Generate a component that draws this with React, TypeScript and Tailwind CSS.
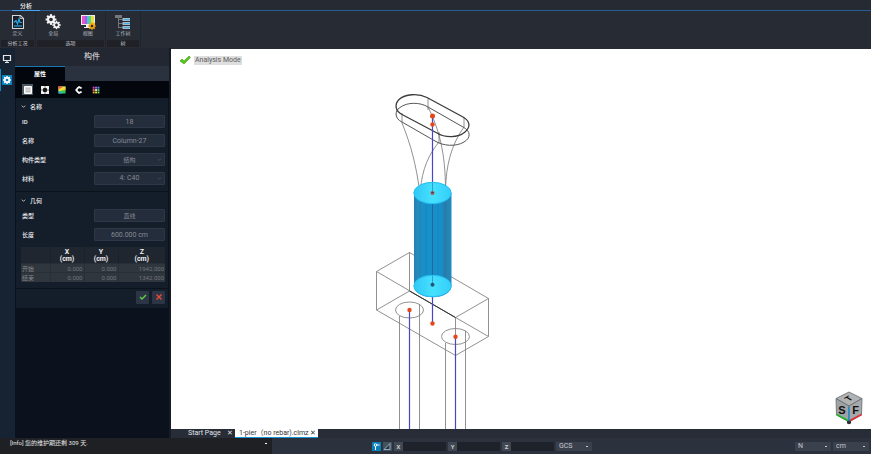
import React from "react";

const font = "font-['Roboto','Noto_Sans_CJK_SC',sans-serif]";

function RibbonGroup({ title, width, children }: { title: string; width: string; children: React.ReactNode }) {
  return (
    <section className={`flex shrink-0 flex-col border-r border-[#20242c] ${width}`}>
      <div className="flex flex-1 justify-around">{children}</div>
      <h2 className="mx-px mb-px h-[7px] bg-[#1f2127] text-center text-[5px] leading-[7px] text-[#c5c8cf]">{title}</h2>
    </section>
  );
}

function RibbonButton({ label, children }: { label: string; children: React.ReactNode }) {
  return (
    <button type="button" className="flex w-7 flex-col items-center pt-[3px] text-[5px] leading-[6px] text-[#b5b9c1]">
      <svg viewBox="0 0 16 16" className="h-4 w-4" aria-hidden="true">
        {children}
      </svg>
      {label}
    </button>
  );
}

function Gear({ cx, cy, r, color, hole }: { cx: number; cy: number; r: number; color: string; hole: string }) {
  return (
    <g>
      <circle cx={cx} cy={cy} r={r} fill={color} />
      {[0, 45, 90, 135].map((a) => (
        <rect key={a} x={cx - r * 0.25} y={cy - r * 1.35} width={r * 0.5} height={r * 2.7} fill={color} transform={`rotate(${a} ${cx} ${cy})`} />
      ))}
      <circle cx={cx} cy={cy} r={r * 0.45} fill={hole} />
    </g>
  );
}

function Ribbon() {
  return (
    <div className="flex h-[37px] shrink-0 bg-[#272b34]">
      <RibbonGroup title="分析工况" width="w-9">
        <RibbonButton label="定义">
          <path d="M2.500 1.500h8l3 3v10h-11z" fill="#17202a" stroke="#d4d6da" strokeWidth="1.100" />
          <path d="M10 1.500v3h3.500" fill="none" stroke="#d4d6da" strokeWidth=".8" />
          <path d="M4 8.500l2-2 1.500 3.500 1.500-5 1 3.500h2" fill="none" stroke="#29a5df" strokeWidth="1.200" />
          <path d="M4 12h8" stroke="#29a5df" strokeWidth="1.200" />
        </RibbonButton>
      </RibbonGroup>
      <RibbonGroup title="选项" width="w-[70px]">
        <RibbonButton label="全局">
          <Gear cx={6} cy={5.5} r={4} color="#f2f2f2" hole="#272b34" />
          <Gear cx={11.5} cy={11} r={3.1} color="#f2f2f2" hole="#272b34" />
        </RibbonButton>
        <RibbonButton label="视图">
          <path d="M1 1h14v10H1z" fill="#eee" />
          <path d="M2 2h3v8H2z" fill="#ef55c6" />
          <path d="M5 2h2v8H5z" fill="#9b60ee" />
          <path d="M7 2h2v8H7z" fill="#3fc9e6" />
          <path d="M9 2h2v8H9z" fill="#55dc6a" />
          <path d="M11 2h3v8h-3z" fill="#e9dc45" />
          <path d="M6 11h3v2h2v1H4v-1h2z" fill="#eee" />
          <Gear cx={12} cy={12} r={2.8} color="#f5a60d" hole="#272b34" />
        </RibbonButton>
      </RibbonGroup>
      <RibbonGroup title="树" width="w-[35px]">
        <RibbonButton label="工作树">
          <path d="M0 1h7v3H0z" fill="#74777c" />
          <path d="M3.500 4v10M3.500 5.500h4M3.500 9.500h4M3.500 13.500h4" fill="none" stroke="#74777c" strokeWidth="1" />
          <path d="M7.500 4H15v3H7.500zM7.500 8H15v3H7.500zM7.500 12H15v3H7.500z" fill="#a5bccb" />
          <path d="M9 5h6v1H9zM9 9h6v1H9zM9 13h6v1H9z" fill="#43a9e2" />
        </RibbonButton>
      </RibbonGroup>
    </div>
  );
}

function Chevron({ className }: { className: string }) {
  return (
    <svg viewBox="0 0 6 6" className={className} aria-hidden="true">
      <path d="M1 2l2 2 2-2" fill="none" stroke="currentColor" strokeWidth=".9" />
    </svg>
  );
}

const box = "h-[13px] w-[71px] rounded-[1px] border border-[#2e3746] bg-[#242d3c] text-center leading-[11px] text-[#858b94]";

function Field({ id, label, value, size, select }: { id: string; label: string; value: string; size: string; select?: boolean }) {
  return (
    <div className="flex items-center justify-between pr-[3px] pl-[6px]">
      <label htmlFor={id} className="text-[6px] leading-[13px] font-medium text-[#eceef0]">
        {label}
      </label>
      {select ? (
        <div className="relative flex">
          <select id={id} className={`${box} ${size} appearance-none [text-align-last:center]`}>
            <option>{value}</option>
          </select>
          <Chevron className="pointer-events-none absolute top-1 right-[3px] h-[5px] w-[5px] text-[#4b5463]" />
        </div>
      ) : (
        <input id={id} className={`${box} ${size}`} defaultValue={value} />
      )}
    </div>
  );
}

function Section({ title, children }: { title: string; children: React.ReactNode }) {
  return (
    <section className="border-b border-[#0b121b] bg-[#141e2a] pt-1 pb-[6px]">
      <h3>
        <button type="button" className="mb-1 flex h-[9px] items-center gap-1 pl-[5px] text-[6px] leading-[9px] font-medium text-[#eceef0]">
          <Chevron className="h-[5px] w-[5px]" />
          {title}
        </button>
      </h3>
      <div className="flex flex-col gap-[6px]">{children}</div>
    </section>
  );
}

function ToolButton({ label, active, children }: { label: string; active?: boolean; children: React.ReactNode }) {
  return (
    <button type="button" aria-label={label} className={`flex h-[11px] w-[11px] items-center justify-center ${active ? "bg-[#4c5963]" : ""}`}>
      <svg viewBox="0 0 8 8" className="h-2 w-2" aria-hidden="true">
        {children}
      </svg>
    </button>
  );
}

const coordinates = [
  ["开始", "0.000", "0.000", "1942.000"],
  ["结束", "0.000", "0.000", "1342.000"],
];
const swatches = ["#e83ab4", "#a269e8", "#4c9be8", "#f06a4b", "#e5e5e5", "#4fce76", "#f1a838", "#e8dc48", "#79d84a"];

function PropertyPanel() {
  return (
    <aside className="flex w-[154px] shrink-0 flex-col bg-[#0b121d]">
      <h1 className="h-[18px] shrink-0 bg-[#222731] text-center text-[8px] leading-[18px] text-[#e7e8ea]">构件</h1>
      <div className="flex h-[15px] shrink-0 bg-[#2b323f]">
        <button type="button" className="w-[50px] border-t border-[#1778b5] bg-[#03070d] text-[6px] leading-[14px] font-bold text-white">
          属性
        </button>
      </div>
      <div className="flex h-[17px] shrink-0 items-center gap-[6px] bg-[#03070d] pl-[7px]">
        <ToolButton label="属性" active>
          <path d="M.5.5h7v7h-7z" fill="#ddd" stroke="#fff" />
          <path d="M2 2.500h4M2 4h4M2 5.500h4" stroke="#aaa" strokeWidth=".5" />
        </ToolButton>
        <ToolButton label="截面">
          <path d="M0 0h8v8H0z" fill="#f1f1f1" />
          <path d="M2.500 2h3v.5H6v3h-.5V6h-3v-.5H2v-3h.5zM3 .7h2v.6H3zM3 6.700h2v.6H3zM.7 3h.6v2H.7zM6.700 3h.6v2h-.6z" fill="#141414" />
        </ToolButton>
        <ToolButton label="颜色">
          <path d="M.5.5h7v7h-7z" fill="#32c865" />
          <path d="M.5.5h7v3l-7 2z" fill="#f2df38" />
          <path d="M.5.5h5l-5 3z" fill="#f3554d" />
          <path d="M.5 5l4 2.500h-4z" fill="#329be8" />
          <path d="M5 4.500l2.500-2v2z" fill="#ff9e30" />
        </ToolButton>
        <ToolButton label="连接">
          <path d="M6.500 2.500A2.600 2.600 0 1 0 6.500 5.500" fill="none" stroke="#fff" strokeWidth="1.800" />
          <path d="M0 4h2M4 0v2M4 6v2" stroke="#fff" />
        </ToolButton>
        <ToolButton label="网格">
          {swatches.map((c, i) => (
            <rect key={c} x={0.7 + (i % 3) * 2.4} y={0.7 + Math.floor(i / 3) * 2.4} width="1.900" height="1.900" fill={c} />
          ))}
        </ToolButton>
      </div>
      <div className="shrink-0 px-px">
        <Section title="名称">
          <Field id="member-id" label="ID" value="18" size="text-[7px]" />
          <Field id="member-name" label="名称" value="Column-27" size="text-[7px]" />
          <Field id="member-type" label="构件类型" value="结构" size="text-[6px]" select />
          <Field id="material" label="材料" value="4: C40" size="text-[7px]" select />
        </Section>
        <Section title="几何">
          <Field id="line-type" label="类型" value="直线" size="text-[6px]" />
          <Field id="length" label="长度" value="600.000 cm" size="text-[7px]" />
          <div className="pr-[3px] pl-[5px]">
            <table className="w-full table-fixed border-collapse text-[6px] leading-[7px]">
              <colgroup>
                <col className="w-[29px]" />
                <col className="w-[34px]" />
                <col className="w-[34px]" />
                <col />
              </colgroup>
              <thead className="bg-[#202630] text-[7px] text-[#f0f1f2]">
                <tr>
                  <td />
                  {["X", "Y", "Z"].map((axis) => (
                    <th key={axis} className="border-l border-[#1a222c] pt-[2px] font-bold">
                      {axis}
                      <br />
                      (cm)
                    </th>
                  ))}
                </tr>
              </thead>
              <tbody className="bg-[#30363d] text-[#70757b]">
                {coordinates.map((row) => (
                  <tr key={row[0]} className="border-t border-[#292f37]">
                    <th className="h-[9px] pl-px text-left font-normal text-[#838789]">{row[0]}</th>
                    {row.slice(1).map((value, i) => (
                      <td key={i} className="border-l border-[#292f37] pr-px text-right">
                        {value}
                      </td>
                    ))}
                  </tr>
                ))}
              </tbody>
            </table>
          </div>
        </Section>
        <div className="flex justify-end gap-[3px] bg-[#141e2a] pt-[2px] pr-[3px] pb-1">
          <button type="button" aria-label="确定" className="flex h-[13px] w-[13px] items-center justify-center rounded-[1px] bg-[#2b3545]">
            <svg viewBox="0 0 8 8" className="h-2 w-2" aria-hidden="true">
              <path d="M1 4l2 2 4-4" fill="none" stroke="#5fd345" strokeWidth="1.300" />
            </svg>
          </button>
          <button type="button" aria-label="取消" className="flex h-[13px] w-[13px] items-center justify-center rounded-[1px] bg-[#2b3545]">
            <svg viewBox="0 0 8 8" className="h-2 w-2" aria-hidden="true">
              <path d="M1.500 1.500l5 5M6.500 1.500l-5 5" fill="none" stroke="#ef4a31" strokeWidth="1.400" />
            </svg>
          </button>
        </div>
      </div>
    </aside>
  );
}

function PierModel() {
  return (
    <svg viewBox="171 49 700 380" className="h-full w-full" role="img" aria-label="1-pier">
      <defs>
        <linearGradient id="shaft">
          <stop offset="0" stopColor="#2781b0" />
          <stop offset=".12" stopColor="#258cbf" />
          <stop offset=".3" stopColor="#1690cb" />
          <stop offset=".7" stopColor="#168fca" />
          <stop offset=".84" stopColor="#287fac" />
          <stop offset="1" stopColor="#228bbf" />
        </linearGradient>
        <linearGradient id="cap">
          <stop offset="0" stopColor="#30c8f5" />
          <stop offset=".5" stopColor="#46e0ff" />
          <stop offset="1" stopColor="#34cffa" />
        </linearGradient>
      </defs>
      <g fill="none" stroke="#858585" strokeWidth=".9">
        <path d="M376.500 271.500L409.500 252.500L488.500 298.500L455.500 317.500zM376.500 271.500V310L455.500 355.500L488.500 336.500V298.500M409.500 252.500V291L488.500 336.500M376.500 310L409.500 291M455.500 317.500V355.500" />
        <path d="M399.500 316V431M419.500 304V431M445.500 343V431M465.500 331V431" />
        <ellipse cx="409.500" cy="310" rx="14" ry="8" />
        <ellipse cx="455.500" cy="336.500" rx="14" ry="8" />
        <path d="M402 123C411 145 416 165 419.500 190M439 142C429 154 422 169 420.500 190M428 107C439 129 445.500 153 445.500 190M464 127C451 145 446 166 445.500 190M402 113v10M428 98v12M439 132v11M464 117v10" />
      </g>
      <g fill="none" stroke="#3c3c3c" strokeWidth="1.300">
        <path d="M402 114.500C395 111 394.500 104 399 99.500C405 94 418 93 427 97.500L463 117C470 121 471 127 465 132C458 138 445 138 437 133z" />
        <path d="M402 122C395 119 394 111 400 107.500C407 102 420 102 428 107L463 127C471 131 471 138 464 142C456 147 443 146 435 141z" stroke="#555" strokeWidth="1" />
      </g>
      <path d="M409.500 291L455.500 317.500" stroke="#333" strokeWidth="1" />
      <path d="M432.500 116V193M432.500 286V323M409.500 310V431M455.500 337V431" stroke="#4646c7" strokeWidth="1.200" />
      <path d="M414 193V286A18.500 11 0 0 0 451.500 286V193z" fill="url(#shaft)" />
      <path d="M420 198V282M426 204V280M438 204V280M445 202V280" stroke="#18739f" strokeWidth=".6" opacity=".6" />
      <path d="M432.500 193V286" stroke="#25679a" />
      <ellipse cx="432.500" cy="193" rx="18.700" ry="10.700" fill="url(#cap)" stroke="#24bff4" />
      <ellipse cx="432.500" cy="286" rx="18.700" ry="10.700" fill="url(#cap)" stroke="#24bff4" />
      <path d="M432.500 183V193M432.500 276V286" stroke="#2e9fcd" />
      <g fill="#e44719">
        <circle cx="432.500" cy="116" r="2.500" />
        <circle cx="432.500" cy="124.500" r="2.200" />
        <circle cx="409.500" cy="310" r="2.200" />
        <circle cx="455.500" cy="336.700" r="2.200" />
        <circle cx="432.500" cy="323.500" r="2.200" />
        <circle cx="432.500" cy="193" r="2" fill="#a05a3c" />
        <circle cx="432.500" cy="284.800" r="2" fill="#245c75" />
      </g>
      <path d="M431.500 192.500h2M431.500 284h2" stroke="#3a367d" />
    </svg>
  );
}

function ViewCube() {
  return (
    <svg viewBox="0 0 28 34" className="absolute right-2 bottom-1 h-[34px] w-7" role="img" aria-label="view cube">
      <path d="M14 1L27 7.500 14 15 1 7.500z" fill="#b0b2b3" stroke="#66696b" strokeWidth=".8" />
      <path d="M1 7.500L14 15V31L1.500 24z" fill="#a0a3a5" stroke="#66696b" strokeWidth=".8" />
      <path d="M27 7.500L14 15V31L26.500 24z" fill="#a6a9ab" stroke="#66696b" strokeWidth=".8" />
      <circle cx="14" cy="31" r="2.200" fill="#2c3237" />
      <path d="M14 16V30" stroke="#1f8ed0" strokeWidth="1.500" />
      <path d="M1.500 23.500L13 29.500" stroke="#20b52f" strokeWidth="1.500" />
      <path d="M26.500 23.500L15 29.500" stroke="#e42f35" strokeWidth="1.500" />
      <g fontFamily="Liberation Sans, sans-serif" fontWeight="bold" fontSize="11" textAnchor="middle" fill="#111">
        <text x="7" y="22.500">S</text>
        <text x="20.500" y="22.500">F</text>
        <text x="0" y="4" transform="matrix(.7 -.42 .7 .42 13.500 7.500)">T</text>
      </g>
    </svg>
  );
}

function Viewport() {
  return (
    <main className="relative min-h-0 flex-1 overflow-hidden bg-white">
      <PierModel />
      <div className="absolute top-[6px] left-2 flex items-center gap-[3px]">
        <svg viewBox="0 0 12 10" className="h-[10px] w-3" aria-hidden="true">
          <path d="M1 6l2-2 2 2 5-5 1.500 1.500L5 9z" fill="#58c51c" stroke="#3ca010" strokeWidth=".6" />
        </svg>
        <span className="bg-[#dedede] px-px text-[7px] leading-[9px] text-[#5d5d5d]">Analysis Mode</span>
      </div>
      <ViewCube />
    </main>
  );
}

function CoordinateInput({ axis }: { axis: string }) {
  return (
    <div className="flex h-[9px]">
      <label htmlFor={`axis-${axis}`} className="w-[9px] bg-[#424853] text-center text-[6px] leading-[9px] font-bold text-[#c9ccd1]">
        {axis}
      </label>
      <input id={`axis-${axis}`} className="h-[9px] w-[43px] bg-[#1e222a] px-1 text-[6px] text-white" />
    </div>
  );
}

function Picker({ label, value }: { label: string; value: string }) {
  return (
    <div className="relative flex">
      <select aria-label={label} className="h-[9px] w-9 appearance-none bg-[#3a414d] pl-[3px] text-[7px] leading-[9px] text-[#c7cad0]">
        <option>{value}</option>
      </select>
      <span className="pointer-events-none absolute top-1 right-1 h-px w-[2px] bg-[#c7cad0]" />
    </div>
  );
}

function StatusBar() {
  return (
    <footer className="flex h-4 shrink-0 bg-[#2b323d]">
      <div className="flex w-[272px] shrink-0 justify-between bg-[#1f2024] pr-[5px] pl-[10px] text-[6px] leading-[10px] text-[#e8e8e8]">
        <span>[Info] 您的维护期还剩 309 天.</span>
        <button type="button" aria-label="展开消息" className="flex h-[11px] w-[2px] items-center">
          <span className="h-px w-[2px] bg-white" />
        </button>
      </div>
      <div className="flex flex-1 items-center justify-between pt-px pr-[2px] pl-[100px]">
        <div className="flex items-center gap-[2px]">
          <div className="flex gap-[2px]">
            <button type="button" aria-label="捕捉" className="h-[9px] w-[9px] bg-[#087fb8]">
              <svg viewBox="0 0 9 9" className="h-[9px] w-[9px]" aria-hidden="true">
                <path d="M4 3h3.500M3.500 4v4" stroke="#fff" />
                <circle cx="3.500" cy="3" r="1.300" fill="none" stroke="#fff" />
              </svg>
            </button>
            <button type="button" aria-label="工作平面" className="h-[9px] w-[9px] bg-[#43505e]">
              <svg viewBox="0 0 9 9" className="h-[9px] w-[9px]" aria-hidden="true">
                <path d="M1 7.500l6-6v6z" fill="#263541" stroke="#a8c4d6" strokeWidth=".8" />
              </svg>
            </button>
          </div>
          <CoordinateInput axis="X" />
          <CoordinateInput axis="Y" />
          <CoordinateInput axis="Z" />
          <Picker label="坐标系" value="GCS" />
        </div>
        <div className="flex gap-[2px]">
          <Picker label="力单位" value="N" />
          <Picker label="长度单位" value="cm" />
        </div>
      </div>
    </footer>
  );
}

export default function App() {
  return (
    <div className={`flex h-screen flex-col overflow-hidden bg-[#272b34] ${font}`}>
      <nav className="flex h-[11px] shrink-0 border-b border-[#285b91] bg-[#252a33] pl-3">
        <button type="button" className="h-[11px] w-7 border-b border-[#42a5f5] text-[6px] leading-[12px] font-medium text-white">
          分析
        </button>
      </nav>
      <Ribbon />
      <div className="flex min-h-0 flex-1">
        <nav className="flex w-[15px] shrink-0 flex-col items-center bg-[#152332] pt-[5px]">
          <button type="button" aria-label="显示" className="h-3 w-full">
            <svg viewBox="0 0 15 12" className="h-3 w-[15px]" aria-hidden="true">
              <path d="M3.500 2.500h7v5h-7zM7 8v2M5 9.500h4" fill="none" stroke="#e8e8e8" strokeWidth="1.200" />
            </svg>
          </button>
          <button type="button" aria-label="设置" aria-pressed="true" className="mt-1 flex h-[22px] w-full items-center border-l border-[#118ac4] pl-px">
            <svg viewBox="0 0 10 10" className="h-[10px] w-[10px] bg-[#087fb8]" aria-hidden="true">
              <Gear cx={5} cy={5} r={3} color="#fff" hole="#087fb8" />
            </svg>
          </button>
        </nav>
        <PropertyPanel />
        <div className="flex min-w-0 flex-1 flex-col border-l-2 border-[#171c24] pt-px">
          <Viewport />
          <div className="flex h-[9px] shrink-0 bg-[#272c36] pl-[10px] text-[7px] leading-[9px]">
            <div className="flex w-[54px] justify-between pr-[2px] pl-[7px] text-[#e2e4e7]">
              <button type="button" className="whitespace-nowrap">Start Page</button>
              <button type="button" aria-label="关闭 Start Page">✕</button>
            </div>
            <div className="flex w-[83px] justify-between border-b border-[#1593d2] bg-white pr-[2px] pl-1 text-[#333]">
              <button type="button" className="whitespace-nowrap">1-pier（no rebar).clmz</button>
              <button type="button" aria-label="关闭 1-pier">✕</button>
            </div>
          </div>
        </div>
      </div>
      <StatusBar />
    </div>
  );
}
